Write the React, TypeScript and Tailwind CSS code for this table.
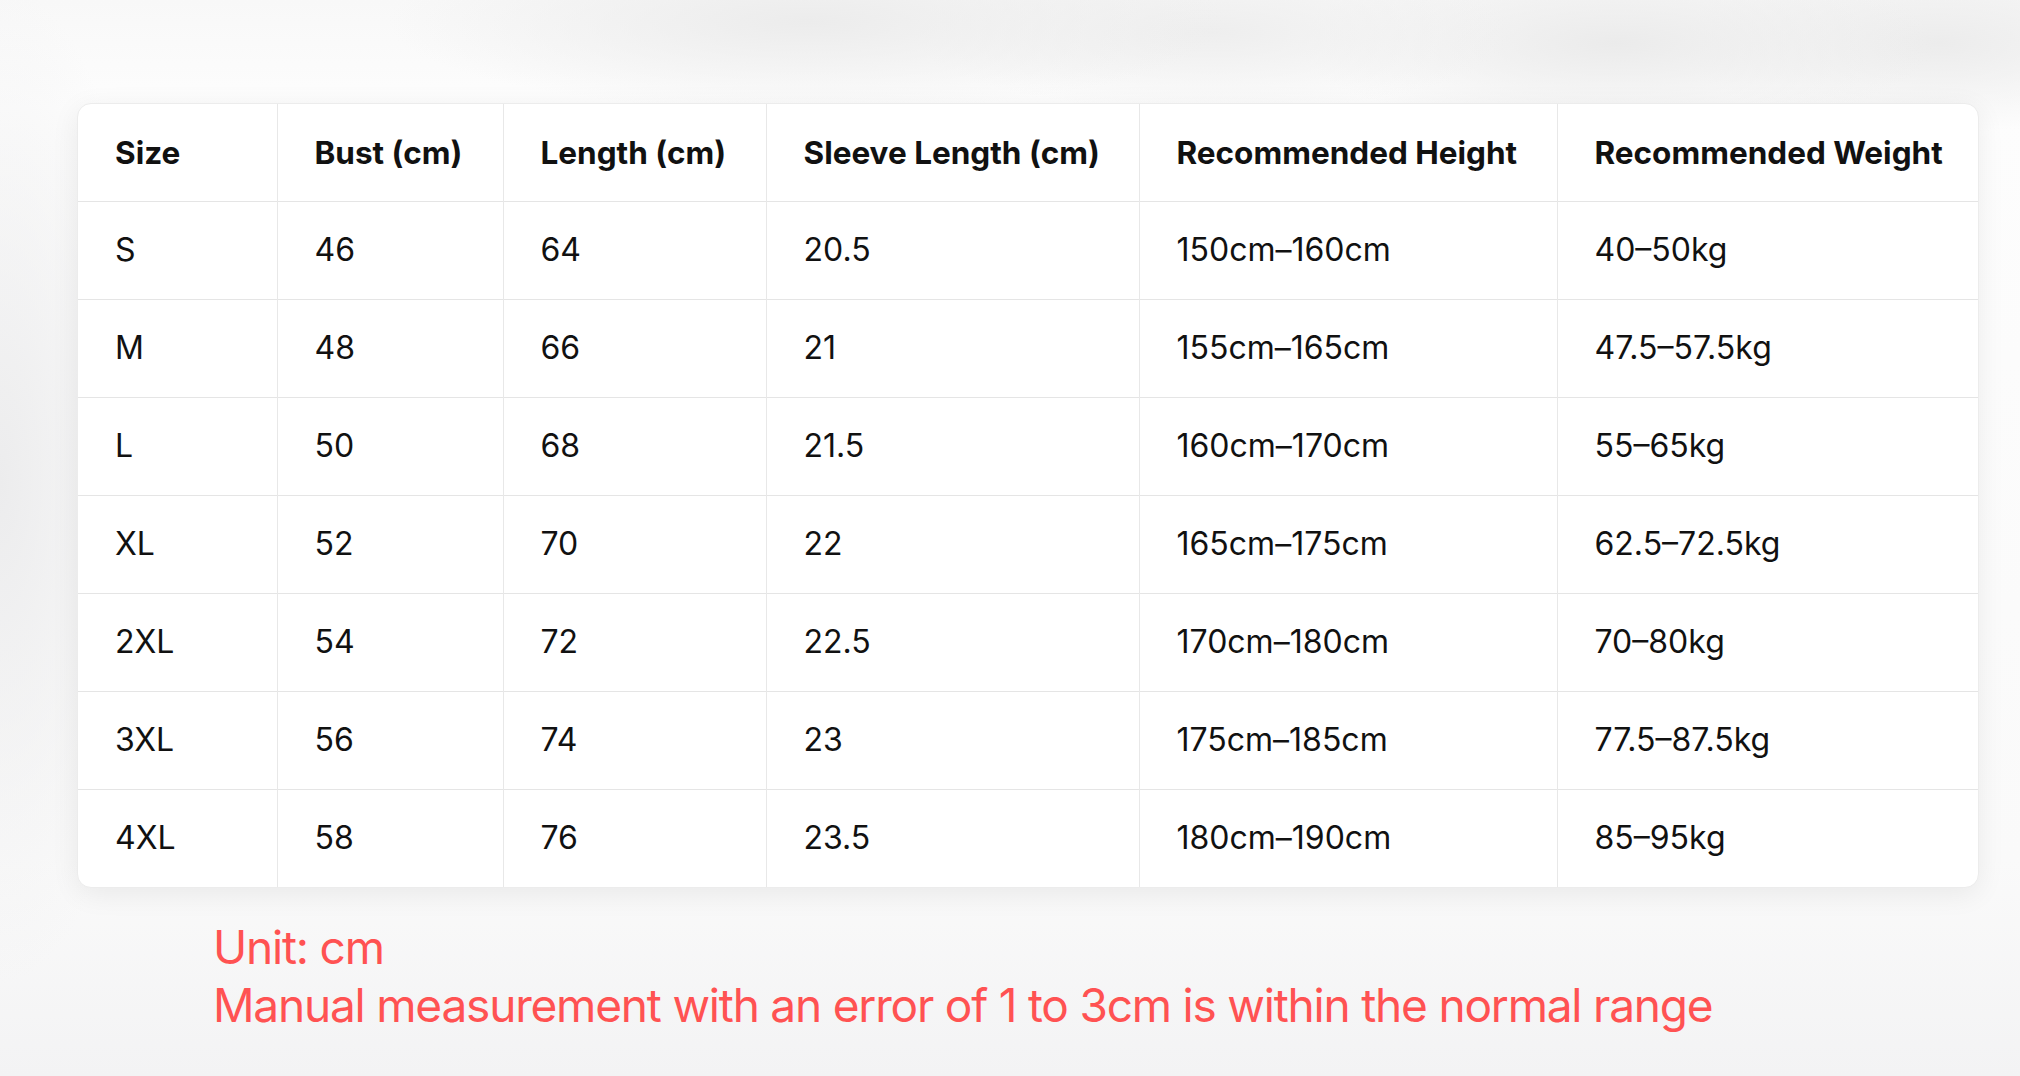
const headers = [
  "Size",
  "Bust (cm)",
  "Length (cm)",
  "Sleeve Length (cm)",
  "Recommended Height",
  "Recommended Weight",
];

const rows = [
  ["S", "46", "64", "20.5", "150cm–160cm", "40–50kg"],
  ["M", "48", "66", "21", "155cm–165cm", "47.5–57.5kg"],
  ["L", "50", "68", "21.5", "160cm–170cm", "55–65kg"],
  ["XL", "52", "70", "22", "165cm–175cm", "62.5–72.5kg"],
  ["2XL", "54", "72", "22.5", "170cm–180cm", "70–80kg"],
  ["3XL", "56", "74", "23", "175cm–185cm", "77.5–87.5kg"],
  ["4XL", "58", "76", "23.5", "180cm–190cm", "85–95kg"],
];

const colWidths = [
  "w-[199px]",
  "w-[226px]",
  "w-[263px]",
  "w-[373px]",
  "w-[418px]",
  "w-[423px]",
];

export default function App() {
  return (
    <div
      className="w-[2020px] h-[1076px] overflow-hidden bg-[radial-gradient(ellipse_420px_90px_at_40%_2%,#ececec,transparent),radial-gradient(ellipse_300px_80px_at_60%_3%,#eeeeee,transparent),radial-gradient(ellipse_320px_90px_at_80%_4%,#ebebeb,transparent),radial-gradient(ellipse_260px_90px_at_96%_4%,#ececec,transparent),radial-gradient(ellipse_160px_500px_at_0%_45%,#ececed,transparent),linear-gradient(180deg,#f8f8f8_0%,#fdfdfd_10%,#fafafa_80%,#f3f3f4_100%)] pt-[103px] pl-[77px] text-[#111]"
      style={{ fontFamily: "Inter, 'Noto Sans', sans-serif" }}
    >
      <div className="w-[1902px] rounded-[14px] bg-white overflow-hidden shadow-[0_6px_28px_rgba(0,0,0,0.07)] border border-[#ececec]">
        <table className="table-fixed border-collapse w-full">
          <colgroup>
            {colWidths.map((w, i) => (
              <col key={i} className={w} />
            ))}
          </colgroup>
          <thead>
            <tr className="h-[97px] border-b border-[#e5e5e5]">
              {headers.map((h, i) => (
                <th
                  key={h}
                  className={`text-left font-bold text-[31.5px] pl-[37px] pr-0 ${
                    i < headers.length - 1 ? "border-r border-[#e8e8e8]" : ""
                  }`}
                >
                  {h}
                </th>
              ))}
            </tr>
          </thead>
          <tbody>
            {rows.map((r, ri) => (
              <tr
                key={r[0]}
                className={`h-[98px] ${
                  ri < rows.length - 1 ? "border-b border-[#e5e5e5]" : ""
                }`}
              >
                {r.map((c, i) => (
                  <td
                    key={i}
                    className={`text-[32px] font-normal pl-[37px] ${
                      i < r.length - 1 ? "border-r border-[#e8e8e8]" : ""
                    }`}
                  >
                    {c}
                  </td>
                ))}
              </tr>
            ))}
          </tbody>
        </table>
      </div>
      <div className="pl-[136px] pt-[30px] text-[#ff5252] text-[46px] leading-[58px] tracking-[-1.2px]">
        <p>Unit: cm</p>
        <p>Manual measurement with an error of 1 to 3cm is within the normal range</p>
      </div>
    </div>
  );
}
